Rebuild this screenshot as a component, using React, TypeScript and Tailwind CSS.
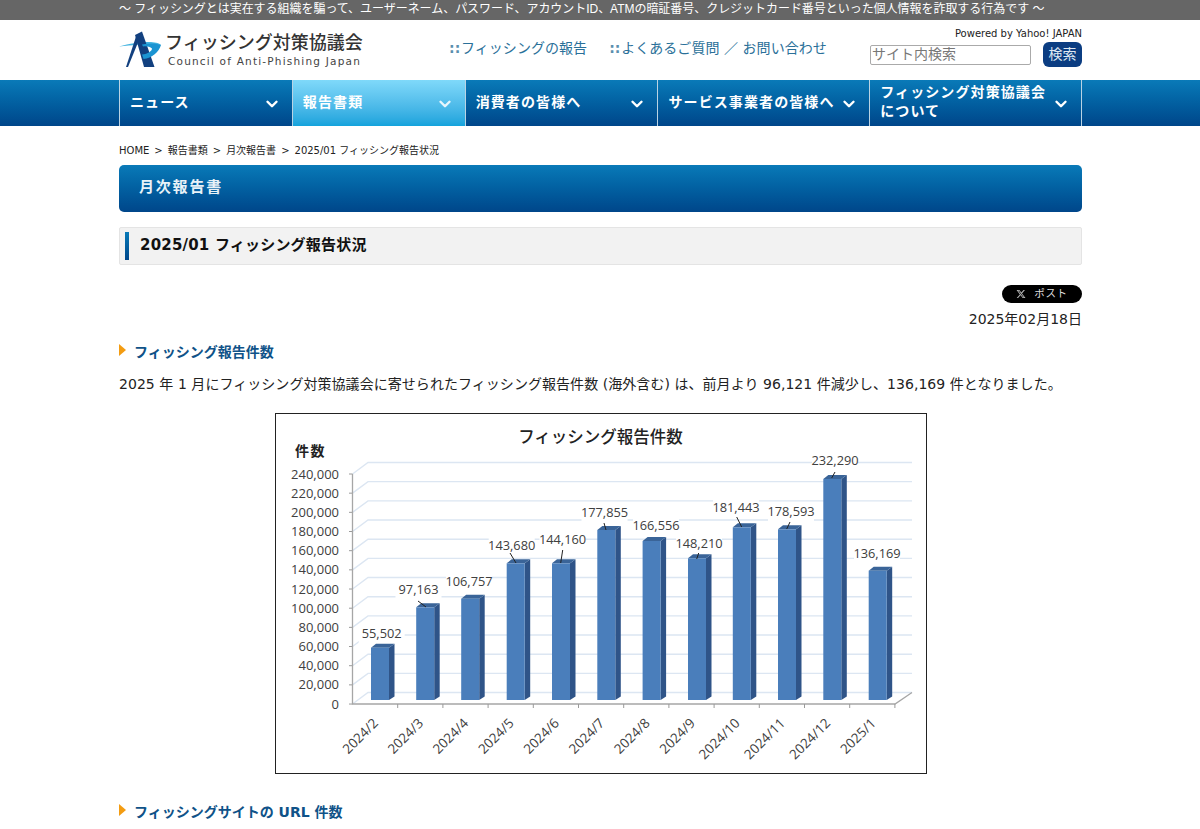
import { ChevronDown } from "lucide-react";

const navItems = [
  { label: "ニュース", width: "w-[173px]", active: false },
  { label: "報告書類", width: "w-[173px]", active: true },
  { label: "消費者の皆様へ", width: "w-[193px]", active: false },
  { label: "サービス事業者の皆様へ", width: "w-[212px]", active: false },
  { label: "フィッシング対策協議会について", width: "w-[212px]", active: false },
];

const bars = [
  { month: "2024/2", value: "55,502", x: 371, top: 647.7, lx: 381.7, ly: 634, lead: null },
  { month: "2024/3", value: "97,163", x: 416.2, top: 607.3, lx: 418.5, ly: 590, lead: [418, 601, 426, 607] },
  { month: "2024/4", value: "106,757", x: 461.2, top: 598.7, lx: 469, ly: 582, lead: null },
  { month: "2024/5", value: "143,680", x: 506.7, top: 563.3, lx: 511.7, ly: 546, lead: [510, 553, 516, 563] },
  { month: "2024/6", value: "144,160", x: 552, top: 563.3, lx: 562.5, ly: 540, lead: [562.7, 550, 560.7, 563] },
  { month: "2024/7", value: "177,855", x: 597.3, top: 530, lx: 604.5, ly: 513, lead: [604, 523, 606, 530] },
  { month: "2024/8", value: "166,556", x: 642.6, top: 541, lx: 656, ly: 526, lead: null },
  { month: "2024/9", value: "148,210", x: 688, top: 558.3, lx: 699, ly: 544, lead: [698.7, 553, 696.7, 559] },
  { month: "2024/10", value: "181,443", x: 732.8, top: 527.3, lx: 736, ly: 508, lead: [736.7, 517, 741.7, 527] },
  { month: "2024/11", value: "178,593", x: 778, top: 529.3, lx: 791, ly: 512, lead: [790, 522, 786.7, 529] },
  { month: "2024/12", value: "232,290", x: 823.3, top: 479, lx: 835, ly: 461, lead: [835, 472, 831.7, 478] },
  { month: "2025/1", value: "136,169", x: 868.7, top: 570.7, lx: 877, ly: 554, lead: null },
];

const yLabels = ["240,000", "220,000", "200,000", "180,000", "160,000", "140,000", "120,000", "100,000", "80,000", "60,000", "40,000", "20,000", "0"];

function Logo() {
  return (
    <svg width="44" height="40" viewBox="0 0 44 40" className="shrink-0">
      <path d="M0 16.5 C12 13 24 11.5 32 12 C37 12.3 41 13.5 42 15 C36 13.5 20 14.5 0 16.5Z" fill="#45b4e0" />
      <path d="M17.5 5 L7 37 L9 37 L20 10Z" fill="#12407f" />
      <path d="M16 5 L23 1.5 L35.5 37 L25 37Z" fill="#12407f" />
      <path d="M23 14.5 C30 13 38 13 42 15 C40 22 33 28 24.5 29 L23 24.5 C29 24 33 21 33 18.5 C31 16.5 27 16 24 16.5Z" fill="#1b94d2" />
    </svg>
  );
}

function Chart() {
  return (
    <svg viewBox="276 414 650 359" width="650" height="359" className="block">
      {yLabels.map((label, i) => {
        const y = 474 + i * 19.17;
        return (
          <g key={label}>
            <path d={`M352.5 ${y} L368 ${y - 11.5} H912`} fill="none" stroke="#dce6f2" strokeWidth="1.4" />
            <line x1="349" x2="352.5" y1={y} y2={y} stroke="#9a9a9a" />
            <text x="339" y={y + 4.6} textAnchor="end" fontSize="13" fill="#404040" fontFamily="'Open Sans', sans-serif">
              {label}
            </text>
          </g>
        );
      })}
      <path d="M352.5 474 V704 H895 L912 692.5" fill="none" stroke="#a6a6a6" strokeWidth="1.3" />
      {bars.map((bar, i) => (
        <line key={bar.month} x1={397.7 + i * 45.2} x2={397.7 + i * 45.2} y1="704" y2="708" stroke="#9a9a9a" />
      ))}
      {bars.map((bar) => (
        <g key={bar.month}>
          <polygon
            points={`${bar.x + 18},${bar.top} ${bar.x + 23.5},${bar.top - 4} ${bar.x + 23.5},696.5 ${bar.x + 18},700`}
            fill="#2f5488"
          />
          <polygon
            points={`${bar.x},${bar.top} ${bar.x + 18},${bar.top} ${bar.x + 23.5},${bar.top - 4} ${bar.x + 5},${bar.top - 4}`}
            fill="#3a6498"
          />
          <rect x={bar.x} y={bar.top} width="18" height={700 - bar.top} fill="#4a7ebb" />
        </g>
      ))}
      {bars.map((bar) => (
        <g key={bar.value}>
          <rect x={bar.lx - 23} y={bar.ly - 9} width="46" height="18" fill="#ffffff" />
          <text x={bar.lx} y={bar.ly + 4.4} textAnchor="middle" fontSize="12.8" fill="#404040" fontFamily="'Open Sans', sans-serif">
            {bar.value}
          </text>
          {bar.lead && (
            <line x1={bar.lead[0]} y1={bar.lead[1]} x2={bar.lead[2]} y2={bar.lead[3]} stroke="#222222" strokeWidth="1" />
          )}
        </g>
      ))}
      {bars.map((bar) => (
        <text
          key={bar.month}
          transform={`translate(${bar.x + 8} 724) rotate(-45)`}
          textAnchor="end"
          fontSize="13.5"
          fill="#404040"
          fontFamily="'Open Sans', sans-serif"
        >
          {bar.month}
        </text>
      ))}
      <text x="600.5" y="443" textAnchor="middle" fontSize="16.5" fontWeight="500" fill="#222222" fontFamily="'Noto Sans CJK JP', sans-serif">
        フィッシング報告件数
      </text>
      <text x="295" y="456" fontSize="14" letterSpacing="1.5" fontWeight="700" fill="#222222" fontFamily="'Noto Sans CJK JP', sans-serif">
        件数
      </text>
    </svg>
  );
}

function SectionTitle({ children }: { children: React.ReactNode }) {
  return (
    <h4 className="flex items-center text-[14px] leading-[20px] font-bold text-[#0f5288]">
      <span className="mr-[8px] -mt-[4px] h-0 w-0 border-y-[6.5px] border-l-[7px] border-y-transparent border-l-[#f39c12]" />
      {children}
    </h4>
  );
}

export default function App() {
  return (
    <div className="h-[829px] overflow-hidden bg-white text-[14px] text-[#222222] [font-family:'DejaVu_Sans','Noto_Sans_CJK_JP',sans-serif]">
      <div className="h-[20px] bg-[#666666] text-[12px] leading-[18px] text-white">
        <p className="ml-[119px] w-[963px] tracking-[-0.04px] whitespace-nowrap [font-family:'Liberation_Sans','Noto_Sans_CJK_JP',sans-serif]">
          〜 フィッシングとは実在する組織を騙って、ユーザーネーム、パスワード、アカウントID、ATMの暗証番号、クレジットカード番号といった個人情報を詐取する行為です 〜
        </p>
      </div>

      <header className="ml-[119px] flex h-[60px] w-[963px] items-start">
        <div className="mt-[10px] flex w-[330px] items-center">
          <Logo />
          <div className="ml-[2px] -mt-[3px] flex flex-col">
            <span className="text-[18px] leading-[25px] font-medium text-[#333333]">フィッシング対策協議会</span>
            <span className="ml-[3px] text-[10.5px] leading-[12px] tracking-[1.2px] text-[#444444]">Council of Anti-Phishing Japan</span>
          </div>
        </div>
        <nav className="flex pt-[18px] text-[14px] leading-[20px] tracking-[0.05px] text-[#2a7099]">
          <a className="flex whitespace-nowrap">
            <span className="w-[12px] font-bold text-[#5a8fae]">::</span>フィッシングの報告
          </a>
          <a className="ml-[22px] flex whitespace-nowrap">
            <span className="w-[12px] font-bold text-[#5a8fae]">::</span>よくあるご質問 ／ お問い合わせ
          </a>
        </nav>
        <div className="ml-auto flex w-[212px] flex-col items-end pt-[7px]">
          <span className="text-[10px] leading-[13px] text-[#222222]">Powered by Yahoo! JAPAN</span>
          <div className="mt-[2px] flex w-full items-center justify-between">
            <input
              placeholder="サイト内検索"
              className="h-[20px] w-[161px] rounded-[2px] border border-[#aaaaaa] px-[1px] text-[14px] placeholder:text-[#777777]"
            />
            <button className="h-[25px] w-[39px] rounded-[6px] bg-[#0b3d82] text-[14px] text-[#dfe8f2]">検索</button>
          </div>
        </div>
      </header>

      <div className="h-[46px] bg-gradient-to-b from-[#0a7ab8] to-[#00468a]">
        <ul className="ml-[119px] flex h-full w-[963px] border-r border-[#b9d3e4]">
          {navItems.map((item) => (
            <li
              key={item.label}
              className={`${item.width} flex h-full items-center justify-between border-l border-[#b9d3e4] pl-[10px] pr-[11px] text-[14px] leading-[19px] font-bold tracking-[1.1px] text-white ${
                item.active ? "bg-gradient-to-b from-[#7fd9fa] to-[#12a3dc]" : ""
              }`}
            >
              <span className="-mt-[2px] max-w-[172px]">{item.label}</span>
              <ChevronDown size={18} strokeWidth={3.2} className={`mt-[2px] shrink-0 ${item.active ? "text-[#e6f6fd]" : "text-white"}`} />
            </li>
          ))}
        </ul>
      </div>

      <main className="ml-[119px] w-[963px]">
        <p className="mt-[17px] text-[10px] leading-[16px]">
          HOME<span className="mx-[5px]">&gt;</span>報告書類<span className="mx-[5px]">&gt;</span>月次報告書
          <span className="mx-[5px]">&gt;</span>2025/01 フィッシング報告状況
        </p>
        <h2 className="mt-[6px] flex h-[47px] items-center rounded-[5px] bg-gradient-to-b from-[#0a7ab8] to-[#00468a] pb-[3px] pl-[20px] text-[15px] font-bold tracking-[1.8px] text-[#e8f2f8]">
          月次報告書
        </h2>
        <h3 className="mt-[15px] flex h-[38px] items-center rounded-[2px] border border-[#e4e4e4] bg-[#f2f2f2] pb-[1px] pl-[5px] text-[15px] font-bold tracking-[0.2px] text-[#111111]">
          <span className="mr-[11px] h-[28px] w-[4px] bg-gradient-to-b from-[#0a7ab8] to-[#00468a]" />
          2025/01 フィッシング報告状況
        </h3>

        <div className="mt-[20px] flex flex-col items-end">
          <div className="flex h-[18px] w-[80px] items-center justify-center gap-[8px] rounded-full bg-black text-[10.5px] tracking-[0.6px] text-[#dddddd]">
            <svg width="10" height="10" viewBox="0 0 24 24" fill="#bbbbbb">
              <path d="M18.2 2.3h3.3l-7.2 8.2 8.5 11.2h-6.7l-5.2-6.8-6 6.8H1.7l7.7-8.8L1.3 2.3h6.8l4.7 6.2 5.4-6.2zm-1.2 17.5h1.8L7.1 4.1H5.1l11.9 15.7z" />
            </svg>
            ポスト
          </div>
          <p className="mt-[6px] leading-[20px]">2025年02月18日</p>
        </div>

        <div className="mt-[13px]">
          <SectionTitle>フィッシング報告件数</SectionTitle>
        </div>
        <p className="mt-[12px] leading-[20px] tracking-[0.05px] whitespace-nowrap">
          2025 年 1 月にフィッシング対策協議会に寄せられたフィッシング報告件数 (海外含む) は、前月より 96,121 件減少し、136,169 件となりました。
        </p>

        <div className="ml-[156px] mt-[19px] w-[652px] border border-[#222222]">
          <Chart />
        </div>

        <div className="mt-[28px]">
          <SectionTitle>フィッシングサイトの URL 件数</SectionTitle>
        </div>
      </main>
    </div>
  );
}
